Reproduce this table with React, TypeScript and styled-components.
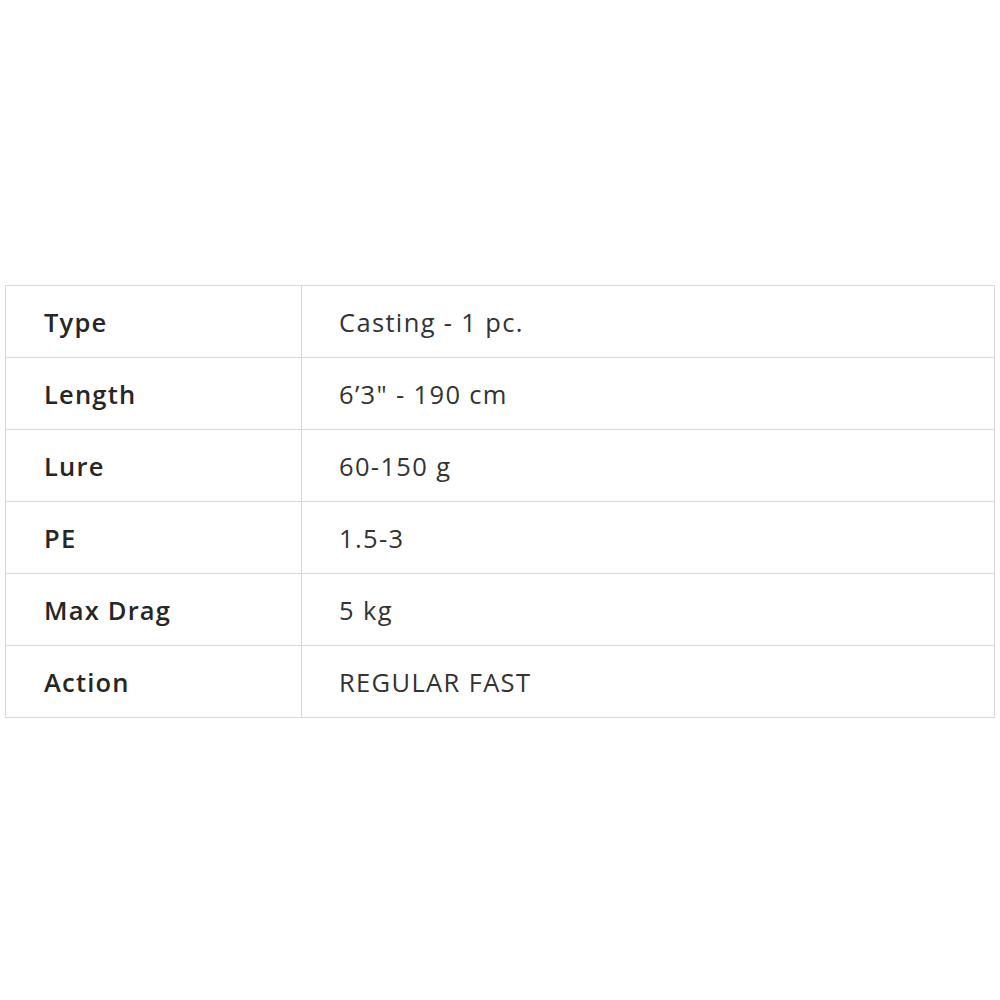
import styled, { createGlobalStyle } from 'styled-components';

const GlobalStyle = createGlobalStyle`
	body {
		margin: 0;
		background: #fff;
		font-family: 'Open Sans', 'Lato', sans-serif;
	}
`;

const Page = styled.div`
	width: 1000px;
	height: 1000px;
	padding: 285px 5px 0 5px;
	box-sizing: border-box;
`;

const SpecTable = styled.table`
	width: 990px;
	border-collapse: collapse;
	border: 1px solid #d9d9d9;
	color: #2e2e2e;
`;

const Row = styled.tr`
	height: 72px;
	border-bottom: 1px solid #d9d9d9;
`;

const Cell = styled.td<{ $label?: boolean }>`
	padding: 0 0 0 ${(props) => (props.$label ? '38px' : '37px')};
	width: ${(props) => (props.$label ? '257px' : 'auto')};
	font-size: 25.5px;
	font-weight: ${(props) => (props.$label ? 600 : 400)};
	color: ${(props) => (props.$label ? '#262626' : '#333')};
	border-right: ${(props) => (props.$label ? '1px solid #d9d9d9' : 'none')};
	vertical-align: middle;
	letter-spacing: ${(props) => (props.$label ? '1.2px' : '1.35px')};
`;

interface Spec {
	name: string;
	value: string;
}

const specs: Spec[] = [
	{ name: 'Type', value: 'Casting - 1 pc.' },
	{ name: 'Length', value: '6\u20193" - 190 cm' },
	{ name: 'Lure', value: '60-150 g' },
	{ name: 'PE', value: '1.5-3' },
	{ name: 'Max Drag', value: '5 kg' },
	{ name: 'Action', value: 'REGULAR FAST' },
];

function App() {
	return (
		<>
			<GlobalStyle />
			<Page>
				<SpecTable>
					<tbody>
						{specs.map((spec) => (
							<Row key={spec.name}>
								<Cell $label>{spec.name}</Cell>
								<Cell>{spec.value}</Cell>
							</Row>
						))}
					</tbody>
				</SpecTable>
			</Page>
		</>
	);
}
export default App;
